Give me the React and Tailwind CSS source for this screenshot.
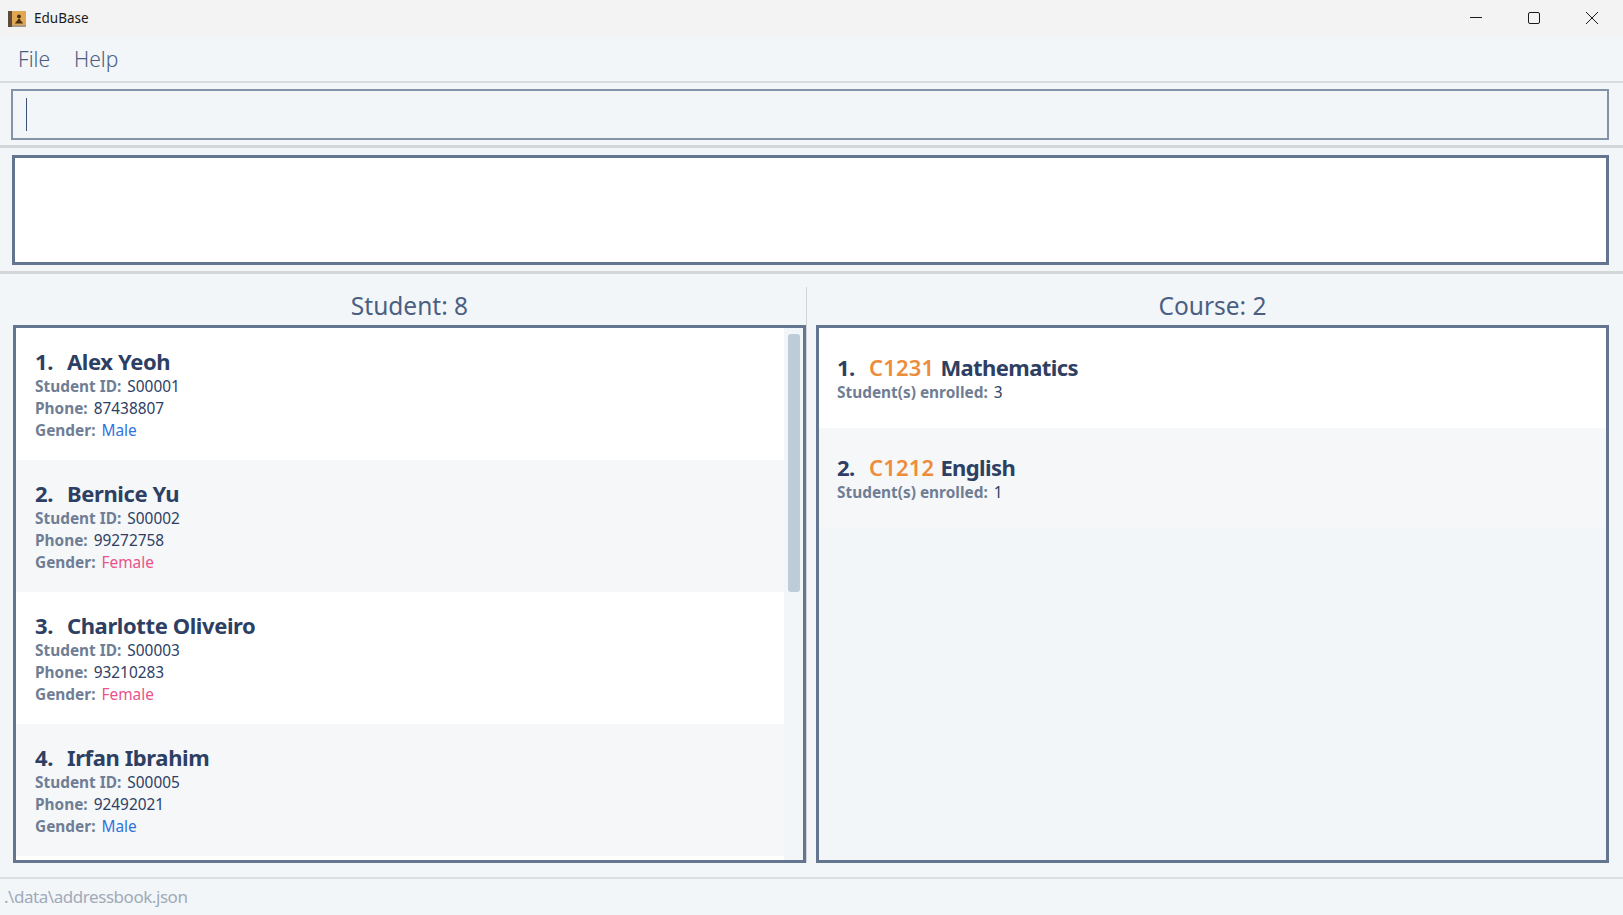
import React from "react";

const students = [
  { name: "Alex Yeoh", id: "S00001", phone: "87438807", gender: "Male" },
  { name: "Bernice Yu", id: "S00002", phone: "99272758", gender: "Female" },
  { name: "Charlotte Oliveiro", id: "S00003", phone: "93210283", gender: "Female" },
  { name: "Irfan Ibrahim", id: "S00005", phone: "92492021", gender: "Male" },
];

const courses = [
  { code: "C1231", name: "Mathematics", enrolled: 3 },
  { code: "C1212", name: "English", enrolled: 1 },
];

function AppIcon() {
  return (
    <svg width="18" height="16" viewBox="0 0 18 16">
      <rect x="0" y="0" width="18" height="16" fill="#e0a652" />
      <rect x="0" y="0" width="4" height="16" fill="#5e4a38" />
      <rect x="4" y="14" width="14" height="2" fill="#a89a88" />
      <circle cx="11" cy="5.5" r="2" fill="#4a2f12" />
      <path d="M7 12.5 C7.5 10.5 10 10 10 8 H12 C12 10 14.5 10.5 15 12.5 Z" fill="#4a2f12" />
    </svg>
  );
}

function Field({ label, children }) {
  return (
    <div className="flex h-[22px] items-center text-[15.4px]">
      <span className="mr-[6px] font-bold text-[#6f7e94]">{label}</span>
      {children}
    </div>
  );
}

function StudentCard({ student, index }) {
  const bg = index % 2 === 0 ? "bg-white" : "bg-[#f6f7f9]";
  const genderColor = student.gender === "Male" ? "text-[#2f73dc]" : "text-[#e9528a]";
  return (
    <div className={`h-[132px] pl-[19px] pt-[19px] ${bg}`}>
      <div className="flex h-[29px] items-center pb-[2px] text-[22px] font-bold leading-none tracking-[-0.4px] text-[#2d4063]">
        <span className="w-[32px]">{index + 1}.</span>
        <span>{student.name}</span>
      </div>
      <Field label="Student ID:">
        <span className="text-[#2d4063]">{student.id}</span>
      </Field>
      <Field label="Phone:">
        <span className="text-[#2d4063]">{student.phone}</span>
      </Field>
      <Field label="Gender:">
        <span className={genderColor}>{student.gender}</span>
      </Field>
    </div>
  );
}

function CourseCard({ course, index }) {
  const bg = index % 2 === 0 ? "bg-white" : "bg-[#f6f7f9]";
  return (
    <div className={`h-[100px] pl-[18px] pt-[25px] ${bg}`}>
      <div className="flex h-[29px] items-center pb-[2px] text-[22px] font-bold leading-none tracking-[-0.6px] text-[#2d4063]">
        <span className="w-[32px]">{index + 1}.</span>
        <span className="mr-[6px] font-semibold tracking-[0.2px] text-[#ed8d3c]">{course.code}</span>
        <span>{course.name}</span>
      </div>
      <Field label="Student(s) enrolled:">
        <span className="text-[#2d4063]">{course.enrolled}</span>
      </Field>
    </div>
  );
}

export default function App() {
  return (
    <div className="flex h-[915px] w-[1623px] flex-col overflow-hidden bg-[#f3f6f9] font-['Noto_Sans','Open_Sans',sans-serif]">
      {/* Title bar */}
      <div className="flex h-[37px] items-center justify-between bg-[#f3f3f3]">
        <div className="flex items-center pl-[8px]">
          <AppIcon />
          <span className="ml-[8px] text-[13.5px] text-[#1a1a1a]">EduBase</span>
        </div>
        <div className="flex items-center pr-[2px] text-[#1a1a1a]">
          <svg width="58" height="37" viewBox="0 0 58 37">
            <path d="M23 17.5 H35" stroke="currentColor" strokeWidth="1" />
          </svg>
          <svg width="58" height="37" viewBox="0 0 58 37">
            <rect x="23.5" y="12.5" width="11" height="11" rx="1.5" fill="none" stroke="currentColor" strokeWidth="1" />
          </svg>
          <svg width="58" height="37" viewBox="0 0 58 37">
            <path d="M23 12 L35 24 M35 12 L23 24" stroke="currentColor" strokeWidth="1" />
          </svg>
        </div>
      </div>

      {/* Menu bar */}
      <div className="flex h-[46px] items-center border-b-2 border-[#d9dbdd] pl-[18px] pt-[2px] text-[21px] font-light text-[#4a5f82]">
        <span className="mr-[24px]">File</span>
        <span>Help</span>
      </div>

      {/* Command box */}
      <div className="border-b-[3px] border-[#d4d6d8] px-[11px] pb-[5px] pt-[6px]">
        <div className="flex h-[51px] w-[1598px] items-center border-2 border-[#8593a8] pl-[13px]">
          <div className="h-[33px] w-[1px] bg-[#3f5273]" />
        </div>
      </div>

      {/* Result box */}
      <div className="border-b-[3px] border-[#d4d6d8] pb-[6px] pl-[12px] pt-[7px]">
        <div className="h-[110px] w-[1597px] border-[3px] border-[#64758f] bg-white" />
      </div>

      {/* Lists */}
      <div className="flex h-[603px] pt-[13px]">
        <div className="flex h-[576px] w-[807px] flex-col border-r border-[#d2d4d6] pl-[13px]">
          <div className="h-[38px] w-[793px] pt-[4px] text-center text-[24.5px] leading-[30px] text-[#4a5f82]">Student: 8</div>
          <div className="relative h-[538px] w-[793px] overflow-hidden border-[3px] border-[#64758f] bg-white">
            {/* scrollbar track */}
            <div className="absolute bottom-0 left-[768px] right-0 top-0 bg-[#f3f6f9]">
              <div className="ml-[4px] mt-[6px] h-[258px] w-[12px] rounded-[3px] bg-[#bdccd9]" />
            </div>
            <div className="w-[768px]">
              {students.map((s, i) => (
                <StudentCard key={s.id} student={s} index={i} />
              ))}
            </div>
          </div>
        </div>
        <div className="flex flex-col pl-[9px]">
          <div className="h-[38px] w-[793px] pt-[4px] text-center text-[24.5px] leading-[30px] text-[#4a5f82]">Course: 2</div>
          <div className="h-[538px] w-[793px] overflow-hidden border-[3px] border-[#64758f] bg-[#f3f6f9]">
            {courses.map((c, i) => (
              <CourseCard key={c.code} course={c} index={i} />
            ))}
          </div>
        </div>
      </div>

      {/* Status bar */}
      <div className="flex flex-1 items-center border-t-2 border-[#dcdee0] pl-[4px] text-[17px] tracking-[-0.45px] text-[#a0aab8]">
        .\data\addressbook.json
      </div>
    </div>
  );
}
